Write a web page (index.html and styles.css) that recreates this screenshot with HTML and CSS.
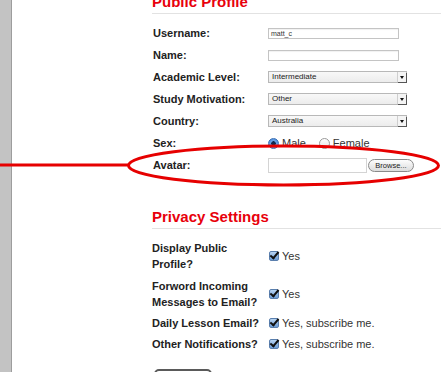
FILE: index.html
```html
<!DOCTYPE html>
<html lang="en">
<head>
    <meta charset="UTF-8">
    <title>Edit Profile</title>
    <link rel="stylesheet" href="styles.css">
</head>
<body>
    <div class="page">
        <div class="sidebar"></div>

        <div class="content">
            <h2 class="section-title">Public Profile</h2>
            <div class="form-grid profile-grid">
                <label>Username:</label>
                <div class="field"><div class="text-input">matt_c</div></div>

                <label>Name:</label>
                <div class="field"><div class="text-input"></div></div>

                <label>Academic Level:</label>
                <div class="field"><div class="select">Intermediate<span class="arrow"></span></div></div>

                <label>Study Motivation:</label>
                <div class="field"><div class="select">Other<span class="arrow"></span></div></div>

                <label>Country:</label>
                <div class="field"><div class="select">Australia<span class="arrow"></span></div></div>

                <label>Sex:</label>
                <div class="field radios">
                    <span class="radio checked"></span><span class="radio-text">Male</span>
                    <span class="radio"></span><span class="radio-text">Female</span>
                </div>

                <label>Avatar:</label>
                <div class="field">
                    <div class="file-input"></div>
                    <div class="browse-btn">Browse...</div>
                </div>
            </div>

            <h2 class="section-title privacy-title">Privacy Settings</h2>
            <div class="form-grid privacy-grid">
                <label>Display Public Profile?</label>
                <div class="field"><span class="checkbox"></span>Yes</div>

                <label>Forword Incoming Messages to Email?</label>
                <div class="field"><span class="checkbox"></span>Yes</div>

                <label class="short">Daily Lesson Email?</label>
                <div class="field short"><span class="checkbox"></span>Yes, subscribe me.</div>

                <label class="short">Other Notifications?</label>
                <div class="field short"><span class="checkbox"></span>Yes, subscribe me.</div>
            </div>

            <div class="save-btn"></div>
        </div>
    </div>

    <!-- hand-drawn highlight over the avatar row -->
    <svg class="highlight" width="441" height="200" viewBox="0 0 441 200">
        <line x1="0" y1="165" x2="130" y2="165" stroke="#e60000" stroke-width="3"/>
        <ellipse cx="283.5" cy="165.5" rx="155" ry="19.5" fill="none" stroke="#e60000" stroke-width="3"/>
    </svg>
</body>
</html>
```

FILE: styles.css
```css
body {
    margin: 0;
    background: #fff;
    font-family: "Liberation Sans", Arial, sans-serif;
    color: #222;
    overflow: hidden;
}
.page {
    display: flex;
    height: 372px;
    overflow: hidden;
}
.sidebar {
    width: 11px;
    flex-shrink: 0;
    background: #c3c3c3;
    border-right: 1px solid #9d9d9d;
}
.content {
    flex: 1;
    padding-left: 140px;
    margin-top: -7px;
}
.section-title {
    margin: 0;
    font-size: 15px;
    line-height: 18px;
    font-weight: bold;
    color: #e8000b;
    padding-bottom: 2px;
    border-bottom: 1px solid #e2e2e2;
}
.privacy-title {
    margin-top: 32px;
}
.form-grid {
    display: grid;
    grid-template-columns: 116px 1fr;
    margin-top: 8px;
}
.form-grid label {
    font-size: 11px;
    font-weight: bold;
    padding-left: 1px;
}
.profile-grid label,
.profile-grid .field {
    height: 22px;
    line-height: 22px;
    display: flex;
    align-items: center;
}
.privacy-grid label,
.privacy-grid .field {
    padding: 3px 0;
    line-height: 16px;
}
.privacy-grid .short {
    padding: 2px 0 3px;
}
.privacy-grid .field {
    display: flex;
    align-items: center;
    font-size: 11px;
    color: #333;
}
.text-input {
    width: 127px;
    height: 9px;
    border: 1px solid #c4c4c4;
    box-shadow: inset 0 1px 1px rgba(0,0,0,0.06);
    font-size: 7px;
    line-height: 9px;
    padding-left: 2px;
    color: #333;
}
.select {
    position: relative;
    width: 134px;
    height: 10px;
    border: 1px solid #b8b8b8;
    background: linear-gradient(#f8f8f8, #ececec);
    font-size: 8px;
    line-height: 10px;
    padding-left: 3px;
    color: #222;
    margin-top: -1px;
}
.arrow {
    position: absolute;
    right: 0;
    top: 0;
    width: 8px;
    height: 10px;
    border-left: 1px solid #cfcfcf;
    background: #f4f4f4;
    box-shadow: 1px 1px 0 #555;
}
.arrow::after {
    content: "";
    position: absolute;
    left: 2px;
    top: 4px;
    border-left: 2px solid transparent;
    border-right: 2px solid transparent;
    border-top: 3px solid #111;
}
.radios {
    font-size: 11px;
    color: #333;
}
.radio {
    width: 9px;
    height: 9px;
    border-radius: 50%;
    border: 1px solid #9a9a9a;
    background: linear-gradient(#fff, #e4e4e4);
    box-sizing: content-box;
}
.radio.checked {
    border-color: #3a6fb5;
    background: radial-gradient(circle, #10294f 0 2px, #6da6e8 2.5px, #3f7fd0 100%);
}
.radio-text {
    margin: 0 13px 0 3px;
}
.file-input {
    width: 97px;
    height: 13px;
    border: 1px solid #d4d4d4;
    background: #fff;
}
.browse-btn {
    width: 44px;
    height: 11px;
    border: 1px solid #8a8a8a;
    border-radius: 7px;
    background: linear-gradient(#fdfdfd, #dcdcdc);
    font-size: 7.5px;
    line-height: 11px;
    text-align: center;
    color: #222;
    margin-left: 1px;
    margin-top: 1px;
}
.checkbox {
    position: relative;
    width: 8px;
    height: 8px;
    border: 1px solid #5a7fae;
    border-radius: 2px;
    background: linear-gradient(#b8d4f2, #6b9bd4);
    margin: 0 3px 0 1px;
    flex-shrink: 0;
}
.checkbox::after {
    content: "";
    position: absolute;
    left: 2px;
    top: -2px;
    width: 3px;
    height: 7px;
    border-right: 2px solid #111;
    border-bottom: 2px solid #111;
    transform: rotate(40deg);
}
.save-btn {
    width: 54px;
    height: 20px;
    margin: 14px 0 0 2px;
    border: 2px solid #5a5a5a;
    border-radius: 5px;
}
.highlight {
    position: absolute;
    left: 0;
    top: 0;
    pointer-events: none;
}
```
